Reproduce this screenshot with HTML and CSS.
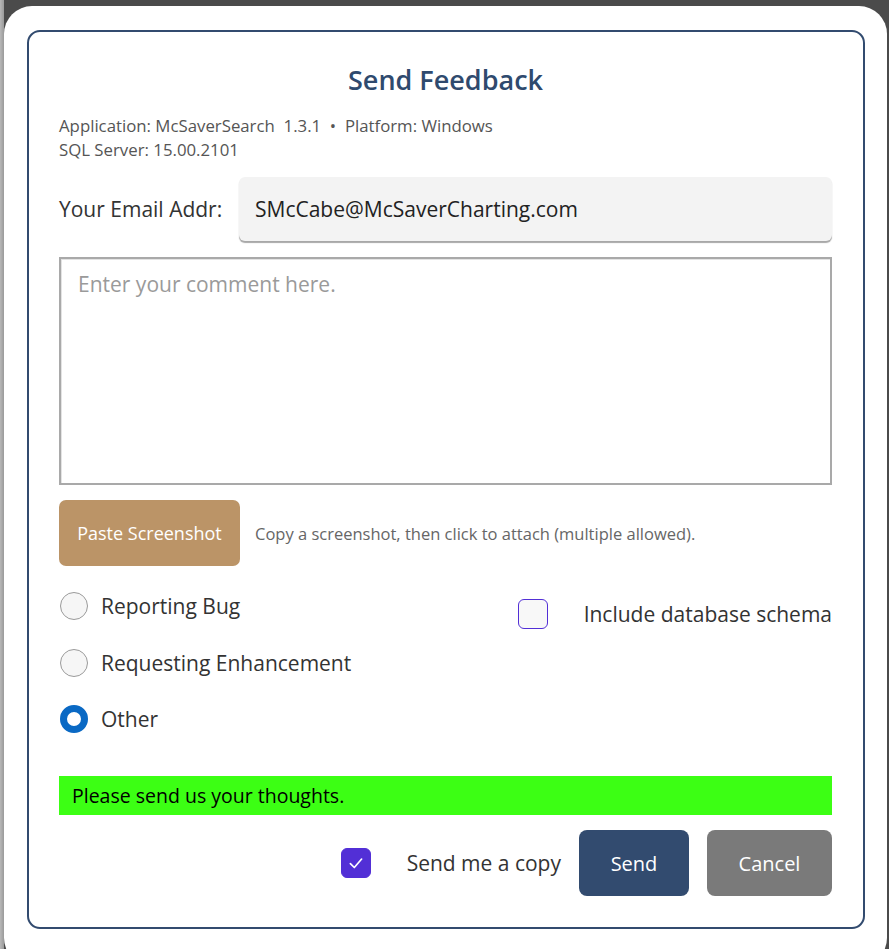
FILE: index.html
```html
<!DOCTYPE html>
<html>
<head>
    <meta charset="UTF-8">
    <title>Send Feedback</title>
    <link rel="stylesheet" href="styles.css">
</head>
<body>
    <div class="window">
        <div class="frame">
            <h1 class="title">Send Feedback</h1>

            <div class="info">
                <div>Application: McSaverSearch&nbsp; 1.3.1 &nbsp;•&nbsp; Platform: Windows</div>
                <div>SQL Server: 15.00.2101</div>
            </div>

            <div class="email-row">
                <label class="email-label" for="email">Your Email Addr:</label>
                <input class="email-input" id="email" type="text" value="SMcCabe@McSaverCharting.com">
            </div>

            <textarea class="comment" placeholder="Enter your comment here."></textarea>

            <div class="paste-row">
                <button class="btn btn-paste">Paste Screenshot</button>
                <span class="paste-hint">Copy a screenshot, then click to attach (multiple allowed).</span>
            </div>

            <div class="options">
                <div class="radios">
                    <label class="radio-item">
                        <span class="radio"></span>
                        <span>Reporting Bug</span>
                    </label>
                    <label class="radio-item">
                        <span class="radio"></span>
                        <span>Requesting Enhancement</span>
                    </label>
                    <label class="radio-item">
                        <span class="radio checked"></span>
                        <span>Other</span>
                    </label>
                </div>
                <label class="check-item schema">
                    <span class="checkbox"></span>
                    <span>Include database schema</span>
                </label>
            </div>

            <div class="status">Please send us your thoughts.</div>

            <div class="actions">
                <label class="check-item">
                    <span class="checkbox checked">
                        <svg viewBox="0 0 16 16" width="18" height="18">
                            <path d="M3 8.5 L6.5 12 L13 4.5" fill="none" stroke="#fff" stroke-width="1.5" stroke-linecap="round" stroke-linejoin="round"/>
                        </svg>
                    </span>
                    <span>Send me a copy</span>
                </label>
                <button class="btn btn-send">Send</button>
                <button class="btn btn-cancel">Cancel</button>
            </div>
        </div>
    </div>
</body>
</html>
```

FILE: styles.css
```css
:root {
    --navy: #324b6f;
    --text: #333333;
    --purple: #522fd6;
}

html, body {
    height: 100%;
}

body {
    margin: 0;
    overflow: hidden;
    background: linear-gradient(to right, #b8b8b8 0, #9a9a9a 4px, #4b4b4b 4px);
    font-family: "Open Sans", "Noto Sans", sans-serif;
    color: var(--text);
}

.window {
    margin: 6px 2px 0 4px;
    height: 960px;
    background: #ffffff;
    border-radius: 28px;
    padding: 24px 22px 0 23px;
    box-sizing: border-box;
}

.frame {
    height: 899px;
    box-sizing: border-box;
    border: 2px solid var(--navy);
    border-radius: 13px;
    padding: 30px 31px 0 30px;
    display: flex;
    flex-direction: column;
}

.title {
    margin: 0;
    text-align: center;
    font-size: 27px;
    font-weight: 600;
    line-height: 36px;
    color: #2f4a6e;
}

.info {
    margin-top: 16px;
    font-size: 16.8px;
    line-height: 24px;
    color: #555555;
}

.email-row {
    margin-top: 15px;
    display: flex;
    align-items: center;
}

.email-label {
    width: 180px;
    font-size: 21px;
    color: var(--text);
}

.email-input {
    flex: 1;
    height: 64px;
    box-sizing: border-box;
    border: none;
    border-radius: 6px;
    background: #f3f3f3;
    box-shadow: 0 2px 1px #a8a8a8;
    padding: 0 16px;
    font-family: inherit;
    font-size: 21px;
    color: #222222;
    outline: none;
}

.comment {
    margin-top: 16px;
    height: 228px;
    box-sizing: border-box;
    border: 2px solid #a9a9a9;
    box-shadow: inset 1px 1px 0 #e3e3e3;
    padding: 11px 17px;
    font-family: inherit;
    font-size: 21px;
    resize: none;
    outline: none;
}

.comment::placeholder {
    color: #9a9a9a;
}

.paste-row {
    margin-top: 15px;
    display: flex;
    align-items: center;
    gap: 15px;
}

.btn {
    border: none;
    font-family: inherit;
    color: #ffffff;
    cursor: pointer;
}

.btn-paste {
    width: 181px;
    height: 66px;
    border-radius: 7px;
    background: #bb9467;
    font-size: 18px;
}

.paste-hint {
    font-size: 16.5px;
    color: #666666;
}

.options {
    margin-top: 26px;
    display: flex;
    justify-content: space-between;
    align-items: flex-start;
}

.radios {
    display: flex;
    flex-direction: column;
    gap: 28.5px;
}

.radio-item,
.check-item {
    display: flex;
    align-items: center;
    font-size: 21px;
    line-height: 28px;
    color: var(--text);
}

.radio {
    width: 28px;
    height: 28px;
    box-sizing: border-box;
    margin-right: 13px;
    border: 1.5px solid #9a9a9a;
    border-radius: 50%;
    background: #f6f6f6;
    margin-left: 1px;
}

.radio.checked {
    border: 7px solid #0a69c4;
    background: #ffffff;
}

.schema {
    margin-top: 7px;
}

.checkbox {
    width: 30px;
    height: 30px;
    box-sizing: border-box;
    border: 1.5px solid var(--purple);
    border-radius: 6px;
    background: #f8f8f8;
    margin-right: 36px;
    display: flex;
    align-items: center;
    justify-content: center;
}

.checkbox.checked {
    background: var(--purple);
}

.status {
    margin-top: 43px;
    height: 39px;
    background: #3cff14;
    color: #000000;
    font-size: 19.5px;
    line-height: 40px;
    padding-left: 13px;
}

.actions {
    margin-top: 15px;
    display: flex;
    justify-content: flex-end;
    align-items: center;
}

.actions .check-item {
    margin-right: 18px;
}

.btn-send,
.btn-cancel {
    height: 66px;
    border-radius: 8px;
    font-size: 20px;
}

.btn-send {
    width: 110px;
    background: var(--navy);
    margin-right: 18px;
}

.btn-cancel {
    width: 125px;
    background: #7a7a7a;
}
```
